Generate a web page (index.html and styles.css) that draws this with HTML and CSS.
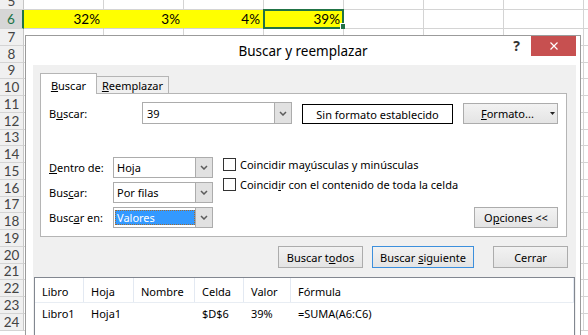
FILE: index.html
```html
<!DOCTYPE html>
<html>
  <head>
    <link rel="stylesheet" href="styles.css">
  </head>
  <body>
    <div class="sheet">
      <div class="row r5"><div class="rh">5</div><div class="cells"></div></div>
      <div class="row r6">
        <div class="rh sel">6</div>
        <div class="cell hl">32%</div>
        <div class="cell hl">3%</div>
        <div class="cell hl">4%</div>
        <div class="cell hl active">39%<span class="handle"></span></div>
        <div class="cells"></div>
      </div>
      <div class="row"><div class="rh">7</div><div class="cells"></div></div>
      <div class="row"><div class="rh">8</div><div class="cells"></div></div>
      <div class="row"><div class="rh">9</div><div class="cells"></div></div>
      <div class="row"><div class="rh">10</div><div class="cells"></div></div>
      <div class="row"><div class="rh">11</div><div class="cells"></div></div>
      <div class="row"><div class="rh">12</div><div class="cells"></div></div>
      <div class="row"><div class="rh">13</div><div class="cells"></div></div>
      <div class="row"><div class="rh">14</div><div class="cells"></div></div>
      <div class="row"><div class="rh">15</div><div class="cells"></div></div>
      <div class="row"><div class="rh">16</div><div class="cells"></div></div>
      <div class="row"><div class="rh">17</div><div class="cells"></div></div>
      <div class="row"><div class="rh">18</div><div class="cells"></div></div>
      <div class="row"><div class="rh">19</div><div class="cells"></div></div>
      <div class="row"><div class="rh">20</div><div class="cells"></div></div>
      <div class="row"><div class="rh">21</div><div class="cells"></div></div>
      <div class="row"><div class="rh">22</div><div class="cells"></div></div>
      <div class="row"><div class="rh">23</div><div class="cells"></div></div>
      <div class="row"><div class="rh">24</div><div class="cells"></div></div>
    </div>

    <div class="dialog">
      <div class="titlebar">
        <span></span>
        <div class="title">Buscar y reemplazar</div>
        <div class="controls">
          <span class="help">?</span>
          <span class="close">
            <svg width="8" height="8" viewBox="0 0 8 8"><path d="M0.5 0.5l7 7M7.5 0.5l-7 7" stroke="#fff" stroke-width="1.2"/></svg>
          </span>
        </div>
      </div>

      <div class="client">
        <div class="tabs">
          <div class="tab active"><span><u>B</u>uscar</span></div>
          <div class="tab"><span><u>R</u>eemplazar</span></div>
        </div>

        <div class="panel">
          <div class="find-row">
            <span class="lbl-find">B<u>u</u>scar:</span>
            <div class="combo wide">
              <span class="val">39</span>
              <span class="drop"><svg width="8" height="5" viewBox="0 0 8 5"><path d="M1 1l3 3 3-3" fill="none" stroke="#5c5c5c" stroke-width="1.5"/></svg></span>
            </div>
            <div class="fmt-box">Sin formato establecido</div>
            <button class="btn fmt-btn"><span><u>F</u>ormato...</span><svg width="5" height="3" viewBox="0 0 5 3"><path d="M0 0h5L2.5 3z" fill="#222"/></svg></button>
          </div>

          <div class="options">
            <span class="lbl"><span><u>D</u>entro de:</span></span>
            <div class="combo">
              <span class="val">Hoja</span>
              <span class="drop"><svg width="8" height="5" viewBox="0 0 8 5"><path d="M1 1l3 3 3-3" fill="none" stroke="#5c5c5c" stroke-width="1.5"/></svg></span>
            </div>
            <div class="checks">
              <div class="check"><span class="box"></span><span>Coincidir ma<u>y</u>úsculas y minúsculas</span></div>
              <div class="check"><span class="box"></span><span>Coincid<u>i</u>r con el contenido de toda la celda</span></div>
            </div>
            <span class="lbl"><span>Bus<u>c</u>ar:</span></span>
            <div class="combo">
              <span class="val">Por filas</span>
              <span class="drop"><svg width="8" height="5" viewBox="0 0 8 5"><path d="M1 1l3 3 3-3" fill="none" stroke="#5c5c5c" stroke-width="1.5"/></svg></span>
            </div>
            <span class="lbl"><span>Busc<u>a</u>r en:</span></span>
            <div class="combo">
              <span class="val"><span class="picked">Valores</span></span>
              <span class="drop"><svg width="8" height="5" viewBox="0 0 8 5"><path d="M1 1l3 3 3-3" fill="none" stroke="#5c5c5c" stroke-width="1.5"/></svg></span>
            </div>
            <button class="btn opt-btn">O<u>p</u>ciones &lt;&lt;</button>
          </div>
        </div>

        <div class="actions">
          <button class="btn all-btn">Buscar t<u>o</u>dos</button>
          <button class="btn next-btn">Buscar <u>s</u>iguiente</button>
          <button class="btn close-btn">Cerrar</button>
        </div>

        <div class="results">
          <div class="res-head">
            <span>Libro</span><span>Hoja</span><span>Nombre</span><span>Celda</span><span>Valor</span><span>Fórmula</span>
          </div>
          <div class="res-row">
            <span>Libro1</span><span>Hoja1</span><span></span><span>$D$6</span><span>39%</span><span>=SUMA(A6:C6)</span>
          </div>
        </div>
      </div>
    </div>
  </body>
</html>
```

FILE: styles.css
```css
/* sheet behind the dialog */
* {
  box-sizing: border-box;
}

body {
  margin: 0;
  width: 588px;
  height: 335px;
  overflow: hidden;
  position: relative;
  background: #fff;
  font-family: "Noto Sans", sans-serif;
  font-size: 11px;
  color: #000;
}

.sheet {
  margin-top: -7px;
  font-family: Lato, "Liberation Sans", sans-serif;
  font-size: 13.5px;
}

.row {
  display: flex;
  height: 16.75px;
}

.row.r5 {
  height: 17px;
}

.row.r6 {
  height: 19px;
}

.rh {
  width: 24px;
  flex: none;
  display: flex;
  align-items: center;
  justify-content: center;
  background: #f0f0f0;
  color: #444;
  border-right: 1px solid #c6c6c6;
  border-bottom: 1px solid #d4d4d4;
}

.rh.sel {
  background: #d6d6d6;
  color: #217346;
  border-right: 2px solid #217346;
}

.cell {
  width: 80px;
  flex: none;
  display: flex;
  align-items: center;
  justify-content: flex-end;
  padding-right: 3px;
  border-right: 1px solid #d4d4d4;
  border-bottom: 1px solid #d4d4d4;
}

.cell.hl {
  background: #ffff00;
  border-right-color: #ffff00;
}

.cell.active {
  position: relative;
}

.cell.active::after {
  content: "";
  position: absolute;
  top: -1px;
  left: -1px;
  right: -1px;
  bottom: -1px;
  border: 2px solid #217346;
}

.handle {
  position: absolute;
  right: -2px;
  bottom: -1px;
  width: 5px;
  height: 6px;
  background: #217346;
  border-left: 1px solid #fff;
  border-top: 1px solid #fff;
  z-index: 1;
}

.cells {
  flex: 1;
  border-bottom: 1px solid #d4d4d4;
  background-image: repeating-linear-gradient(to right, transparent 0 79px, #d4d4d4 79px 80px);
}

/* dialog */
.dialog {
  position: absolute;
  left: 25px;
  top: 35px;
  width: 556px;
  height: 310px;
  display: flex;
  flex-direction: column;
  background: #fff;
  border: 1px solid #9b9b9b;
}

.titlebar {
  display: grid;
  grid-template-columns: 1fr auto 1fr;
  align-items: center;
  height: 29px;
}

.title {
  font-size: 13.5px;
}

.controls {
  justify-self: end;
  align-self: start;
  display: flex;
  margin-right: 4px;
}

.help {
  height: 20px;
  line-height: 20px;
  margin-right: 11px;
  font-size: 14px;
  font-weight: bold;
  color: #333;
}

.close {
  width: 45px;
  height: 20px;
  display: flex;
  align-items: center;
  justify-content: center;
  background: #c75050;
}

.client {
  flex: 1;
  margin: 0 4px 0 7px;
  padding: 8px 9px 0 7px;
  display: flex;
  flex-direction: column;
  background: #f0f0f0;
}

.tabs {
  display: flex;
  align-items: flex-end;
  height: 20px;
}

.tab {
  height: 17px;
  width: 73px;
  margin-left: -1px;
  display: flex;
  align-items: center;
  justify-content: center;
  padding-top: 1px;
  border: 1px solid #b5b5b5;
  border-bottom: none;
}

.tab.active {
  position: relative;
  z-index: 1;
  width: 57px;
  height: 21px;
  margin: 0 0 -1px 0;
  padding-top: 2px;
  background: #fff;
}

.panel {
  background: #fff;
  border: 1px solid #b5b5b5;
  padding: 8px 7px 8px 8px;
}

.find-row {
  display: flex;
  align-items: flex-end;
}

.lbl-find {
  width: 93px;
  align-self: center;
}

.combo {
  height: 21px;
  display: flex;
  background: #fff;
  border: 1px solid #acacac;
}

.combo.wide {
  width: 150px;
  height: 22px;
}

.val {
  flex: 1;
  display: flex;
  align-items: center;
  padding-left: 3px;
}

.combo.wide .val {
  padding-left: 4px;
}

.picked {
  height: 15px;
  width: 80px;
  margin-left: -2px;
  padding-left: 2px;
  display: flex;
  align-items: center;
  background: #3399ff;
  color: #fff;
  outline: 1px dotted #a06a30;
  outline-offset: -1px;
}

.drop {
  width: 17px;
  display: flex;
  align-items: center;
  justify-content: center;
  background: #e1e1e1;
  border-left: 1px solid #acacac;
}

.fmt-box {
  width: 151px;
  height: 20px;
  margin-left: 10px;
  display: flex;
  align-items: center;
  justify-content: center;
  border: 1px solid #000;
}

.btn {
  font: inherit;
  color: #000;
  height: 21px;
  padding: 0;
  border: 1px solid #acacac;
  background: linear-gradient(#f2f2f2, #e4e4e4);
}

.fmt-btn {
  width: 95px;
  margin-left: 10px;
  display: flex;
  align-items: center;
  justify-content: space-between;
  padding: 0 2px 0 17px;
}

.options {
  margin-top: 33px;
  display: grid;
  grid-template-columns: 64px 100px 1fr;
  grid-template-rows: repeat(3, 21px);
  row-gap: 4px;
}

.lbl {
  grid-column: 1;
  display: flex;
  align-items: center;
}

.options .combo {
  grid-column: 2;
}

.checks {
  grid-column: 3;
  grid-row: 1 / 3;
  margin-left: 10px;
  padding-top: 1px;
  display: flex;
  flex-direction: column;
  gap: 7px;
}

.check {
  height: 13px;
  display: flex;
  align-items: center;
  gap: 4px;
}

.box {
  width: 13px;
  height: 13px;
  background: #fff;
  border: 1px solid #333;
}

.opt-btn {
  grid-column: 3;
  grid-row: 3;
  justify-self: end;
  width: 84px;
  margin-right: 1px;
}

.actions {
  margin: 9px -1px 0 0;
  display: flex;
  justify-content: flex-end;
}

.actions .btn {
  height: 22px;
}

.all-btn {
  width: 85px;
}

.next-btn {
  width: 102px;
  margin-left: 9px;
  border-color: #3c8fdc;
}

.close-btn {
  width: 75px;
  margin-left: 19px;
}

.results {
  flex: 1;
  margin: 9px -8px 0 -6px;
  background: #fff;
  border: 1px solid #828790;
  border-bottom: none;
}

.res-head,
.res-row {
  display: grid;
  grid-template-columns: 49px 50px 61px 49px 47px 1fr;
}

.res-head {
  height: 25px;
  border-bottom: 1px solid #e8edf3;
}

.res-head span {
  display: flex;
  align-items: center;
  padding: 2px 0 0 7px;
  border-right: 1px solid #e3e9f2;
}

.res-row {
  height: 20px;
}

.res-row span {
  display: flex;
  align-items: center;
  padding-left: 7px;
}
```
